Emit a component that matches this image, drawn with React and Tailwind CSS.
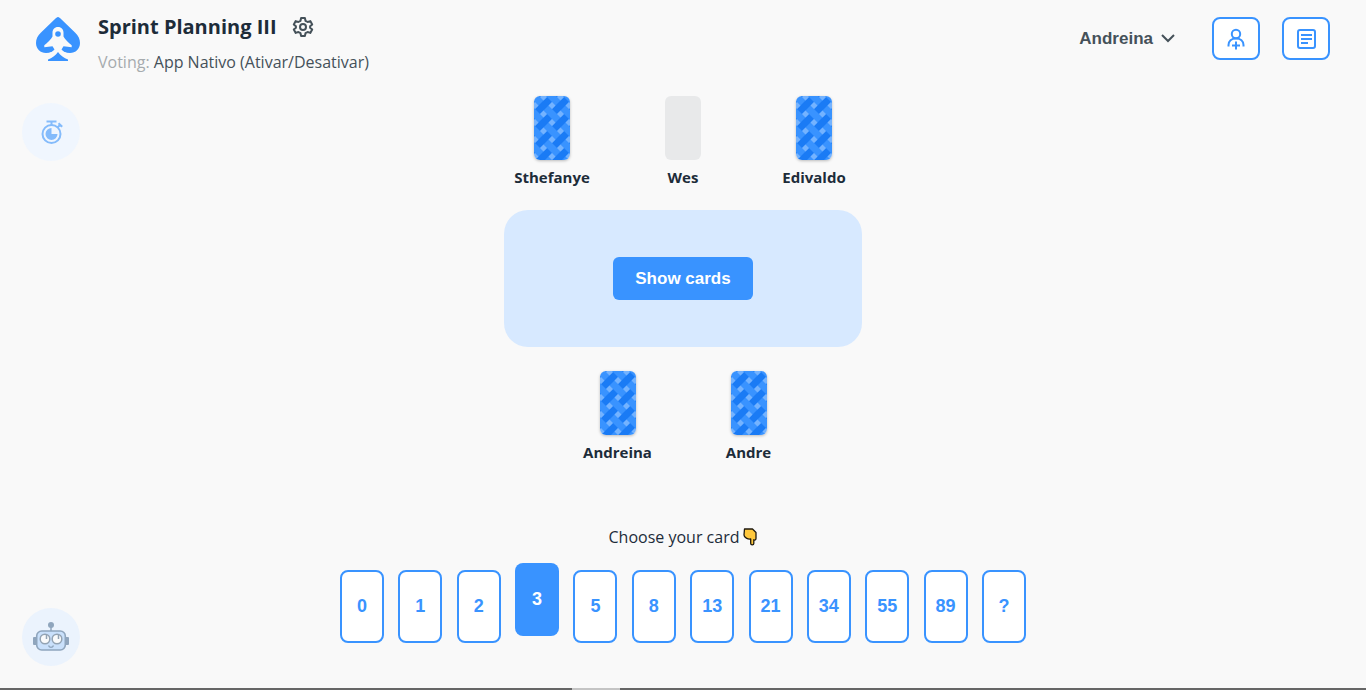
import { useState } from "react";

const topSeats = [
  { name: "Sthefanye", voted: true },
  { name: "Wes", voted: false },
  { name: "Edivaldo", voted: true },
];
const bottomSeats = [
  { name: "Andreina", voted: true },
  { name: "Andre", voted: true },
];
const deck = ["0", "1", "2", "3", "5", "8", "13", "21", "34", "55", "89", "?"];

function Logo() {
  return (
    <svg viewBox="0 0 44 45" className="h-[45px] w-11 shrink-0" aria-hidden="true">
      <path
        fill="#3993ff"
        d="M22 0C23 0 24 1 25 2L39 15.500C42.500 19 44 22 44 26C44 32 39.500 36 34 36C29.500 36 26.500 34.500 24.500 32.500L22 34L19.500 32.500C17.500 34.500 14.500 36 10 36C4.500 36 0 32 0 26C0 22 1.500 19 5 15.500L19 2C20 1 21 0 22 0Z"
      />
      <path
        fill="#f9f9f9"
        d="M22 10C18.500 10 16.500 12.500 16.500 15.500V19.500C15 22.500 11.500 25.500 8.300 28.300V30.200L16.500 29.200L18.500 32.500C16 35.500 12 36.500 9 36.500L12 41H32L35 36.500C32 36.500 28 35.500 25.500 32.500L27.500 29.200L35.700 30.200V28.300C32.500 25.500 29 22.500 27.500 19.500V15.500C27.500 12.500 25.500 10 22 10Z"
      />
      <circle cx="22" cy="17" r="2.800" fill="#3993ff" />
      <path fill="#3993ff" d="M22 35C24.500 38.500 28 41 32 42.500V44H12V42.500C16 41 19.500 38.500 22 35Z" />
    </svg>
  );
}

function Gear() {
  return (
    <svg
      viewBox="0 0 24 24"
      className="size-6"
      fill="none"
      stroke="#455159"
      strokeWidth="2"
      strokeLinejoin="round"
      aria-hidden="true"
    >
      <path d="M10.100 3H13.900L14.500 5.800L16.600 7L19.300 6.100L21.200 9.400L19.100 11.300V12.700L21.200 14.600L19.300 17.900L16.600 17L14.500 18.200L13.900 21H10.100L9.500 18.200L7.400 17L4.700 17.900L2.800 14.600L4.900 12.700V11.300L2.800 9.400L4.700 6.100L7.400 7L9.500 5.800Z" />
      <circle cx="12" cy="12" r="3" />
    </svg>
  );
}

function InviteIcon() {
  return (
    <svg viewBox="0 0 20 22" className="h-[22px] w-5" fill="none" stroke="#3993ff" strokeWidth="2" aria-hidden="true">
      <circle cx="10" cy="6" r="4.200" />
      <path d="M2.500 18.500V17C2.500 13 5.500 10.400 10 10.400S17.500 13 17.500 17V18.500" />
      <path d="M10 13.500V21.500M6 17.500H14" />
    </svg>
  );
}

function ListIcon() {
  return (
    <svg viewBox="0 0 20 22" className="h-[22px] w-5" fill="none" stroke="#3993ff" strokeWidth="2" aria-hidden="true">
      <rect x="2" y="2" width="17" height="18" rx="2" />
      <path d="M5 7H16M5 11H16M5 15H12" />
    </svg>
  );
}

function Stopwatch() {
  return (
    <svg viewBox="0 0 24 24" className="size-6" fill="none" stroke="#84bbfb" strokeWidth="2" aria-hidden="true">
      <circle cx="12.500" cy="14" r="9" />
      <path d="M7.500 1.500H17.500M12.500 1.500V5M18.500 7.500L21.500 4.500M19.500 3.200L23.200 6.700" />
      <path fill="#84bbfb" stroke="none" d="M12.500 8A6 6 0 1 0 18.500 14H12.500Z" />
    </svg>
  );
}

function Robot() {
  return (
    <svg viewBox="0 0 36 30" className="h-[30px] w-9" fill="none" aria-hidden="true">
      <rect x="0" y="15" width="4" height="8" rx="1" fill="#8fa5bd" />
      <rect x="32" y="15" width="4" height="8" rx="1" fill="#8fa5bd" />
      <path d="M18 4V10" stroke="#8fa5bd" strokeWidth="1.500" />
      <circle cx="18" cy="3" r="3" fill="#8fa5bd" />
      <rect x="3.700" y="9" width="28.600" height="19" rx="5" fill="#c9e0fb" stroke="#8fa5bd" strokeWidth="1.600" />
      <circle cx="12" cy="17" r="4.800" fill="#f9fafb" stroke="#93a3b3" strokeWidth="1.500" />
      <circle cx="24" cy="17" r="4.800" fill="#f9fafb" stroke="#93a3b3" strokeWidth="1.500" />
      <path d="M13.500 13V17M25.500 13V17" stroke="#93a3b3" strokeWidth="1.500" />
      <path d="M15.500 23.500C16.500 26 19.500 26 20.500 23.500" stroke="#8fa5bd" strokeWidth="1.400" />
    </svg>
  );
}

function PointDown() {
  return (
    <svg viewBox="0 0 14 18" className="h-[18px] w-3.5" aria-hidden="true">
      <path
        d="M1.500 1H9.500L13 4.500V10.500C13 12 11.500 12.500 10.800 11.800V15.500C10.800 17.300 7.700 17.300 7.700 15.500V11C5 11.500 1 9.500 1 7Z"
        fill="#ffc83d"
        stroke="#1f1a10"
        strokeWidth="1.300"
        strokeLinejoin="round"
      />
    </svg>
  );
}

function CardBack({ id }) {
  return (
    <svg viewBox="0 0 36 64" className="h-16 w-9 rounded-md shadow-[0_1px_3px_rgba(0,0,0,0.25)]" aria-hidden="true">
      <defs>
        <pattern id={id} width="17" height="17" patternUnits="userSpaceOnUse" patternTransform="translate(1 1)">
          <rect width="17" height="17" fill="#3993ff" />
          <path d="M0 12L12 0L17 5L5 17Z" fill="#1a7bf5" />
          <path
            d="M-3.500 8.500L0 5L3.500 8.500L0 12ZM13.500 8.500L17 5L20.500 8.500L17 12ZM8.500 -3.500L12 0L8.500 3.500L5 0ZM8.500 13.500L12 17L8.500 20.500L5 17Z"
            fill="#74b3ff"
          />
        </pattern>
      </defs>
      <rect width="36" height="64" fill={`url(#${id})`} />
    </svg>
  );
}

function Seat({ name, voted }) {
  return (
    <li className="flex w-[131px] flex-col items-center gap-[5px]">
      {voted ? <CardBack id={`weave-${name}`} /> : <span className="h-16 w-9 rounded-md bg-[#e8e9ea]" />}
      <span className="text-[15px] leading-6 font-bold text-[#1d2c39]">{name}</span>
    </li>
  );
}

export default function App() {
  const [picked, setPicked] = useState("3");
  return (
    <div className="flex min-h-screen flex-col bg-[#f9f9f9] font-['Open_Sans','Noto_Sans',sans-serif] text-[#1d2c39]">
      <header className="flex items-start justify-between px-9 pt-3">
        <div className="flex gap-[18px]">
          <div className="pt-[5px]">
            <Logo />
          </div>
          <div>
            <div className="flex items-center gap-3.5">
              <h1 className="text-xl leading-[30px] font-bold">Sprint Planning III</h1>
              <button type="button" aria-label="Game settings">
                <Gear />
              </button>
            </div>
            <p className="mt-2 text-base leading-6 text-[#455159]">
              <span className="text-[#a6abae]">Voting:</span> App Nativo (Ativar/Desativar)
            </p>
          </div>
        </div>
        <div className="flex items-center pt-[5px] font-['Liberation_Sans',sans-serif]">
          <button type="button" className="mr-[37px] flex items-center gap-2 font-bold text-[#455159]">
            <span className="text-[17px] leading-6">Andreina</span>
            <svg viewBox="0 0 14 9" className="h-[9px] w-3.5" fill="none" stroke="#455159" strokeWidth="2" aria-hidden="true">
              <path d="M1 1L7 7L13 1" />
            </svg>
          </button>
          <button
            type="button"
            aria-label="Invite players"
            className="mr-[22px] flex h-[43px] w-12 items-center justify-center rounded-lg border-2 border-[#3993ff] bg-white"
          >
            <InviteIcon />
          </button>
          <button
            type="button"
            aria-label="Show issues"
            className="flex h-[43px] w-12 items-center justify-center rounded-lg border-2 border-[#3993ff] bg-white"
          >
            <ListIcon />
          </button>
        </div>
      </header>

      <div className="grid flex-1 grid-cols-[58px_1fr_58px] px-[22px] pt-[22px]">
        <aside className="flex flex-col justify-between pt-[7px] pb-[22px]">
          <button type="button" aria-label="Timer" className="flex size-[58px] items-center justify-center rounded-full bg-[#f0f6fe]">
            <Stopwatch />
          </button>
          <button type="button" aria-label="Assistant" className="flex size-[58px] items-center justify-center rounded-full bg-[#ebf3fd]">
            <Robot />
          </button>
        </aside>

        <main className="flex flex-col items-center">
          <ul className="flex">
            {topSeats.map((seat) => (
              <Seat key={seat.name} {...seat} />
            ))}
          </ul>
          <section className="mt-[21px] flex h-[137px] w-[358px] items-center justify-center rounded-3xl bg-[#d7e9ff]">
            <button
              type="button"
              className="h-[43px] w-[140px] rounded-md bg-[#3993ff] font-['Liberation_Sans',sans-serif] text-[17px] font-bold text-white"
            >
              Show cards
            </button>
          </section>
          <ul className="mt-6 flex">
            {bottomSeats.map((seat) => (
              <Seat key={seat.name} {...seat} />
            ))}
          </ul>

          <p className="mt-[61px] flex items-center gap-1 text-base leading-6">
            Choose your card <PointDown />
          </p>
          <div className="mt-[21px] flex w-full max-w-[686px] justify-between font-['Liberation_Sans',sans-serif]">
            {deck.map((value) => (
              <button
                key={value}
                type="button"
                aria-pressed={picked === value}
                onClick={() => setPicked(value)}
                className={
                  picked === value
                    ? "h-[73px] w-11 -translate-y-[7px] rounded-lg bg-[#3993ff] pb-0.5 text-lg font-bold text-white"
                    : "h-[73px] w-11 rounded-lg border-2 border-[#3993ff] bg-white pb-0.5 text-lg font-bold text-[#3993ff]"
                }
              >
                {value}
              </button>
            ))}
          </div>
        </main>
      </div>

      <footer className="flex h-0.5 bg-[#666666]">
        <div className="ml-[41.9%] w-12 bg-[#c4c4c4]" />
      </footer>
    </div>
  );
}
